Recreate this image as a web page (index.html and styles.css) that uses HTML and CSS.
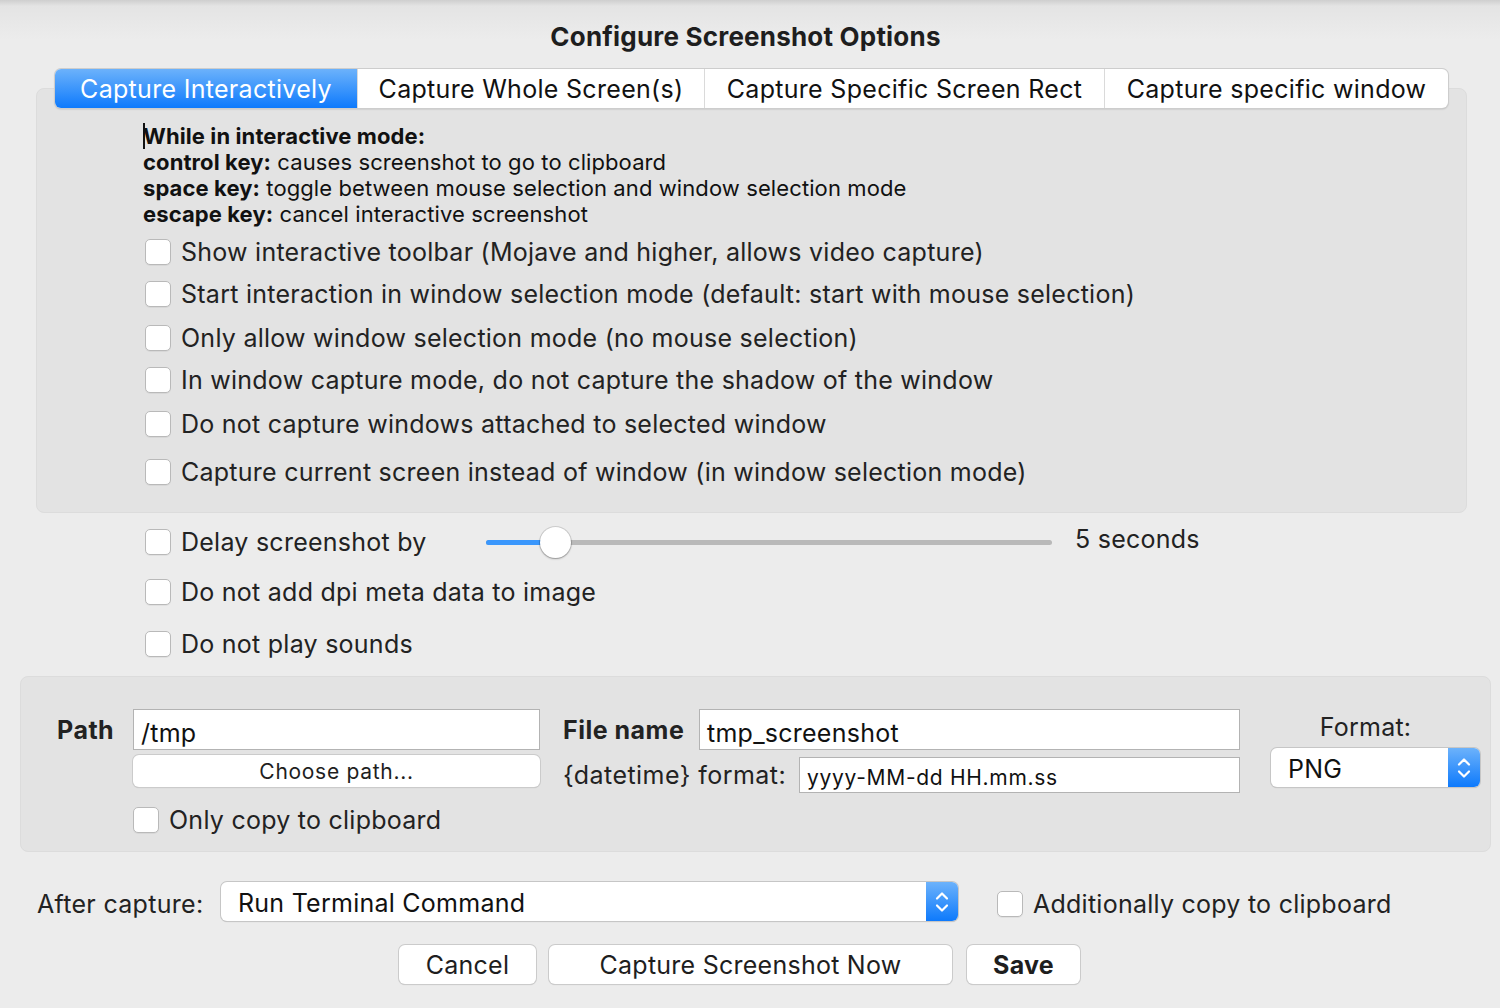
FILE: index.html
```html
<!DOCTYPE html>
<html>
<head>
<meta charset="utf-8">
<link rel="stylesheet" href="styles.css">
</head>
<body>
<div class="window">
  <h1 class="title">Configure Screenshot Options</h1>
  <div class="tabs">
    <div class="tab tab-active t1">Capture Interactively</div>
    <div class="tab t2">Capture Whole Screen(s)</div>
    <div class="tab t3">Capture Specific Screen Rect</div>
    <div class="tab t4">Capture specific window</div>
  </div>
  <div class="panel panel-top">
    <div class="info">
      <div><span class="caret"></span><b>While in interactive mode:</b></div>
      <div><b>control key:</b> causes screenshot to go to clipboard</div>
      <div><b>space key:</b> toggle between mouse selection and window selection mode</div>
      <div><b>escape key:</b> cancel interactive screenshot</div>
    </div>
    <div class="checks">
      <div class="check r1"><span class="box"></span><span>Show interactive toolbar (Mojave and higher, allows video capture)</span></div>
      <div class="check r2"><span class="box"></span><span>Start interaction in window selection mode (default: start with mouse selection)</span></div>
      <div class="check r3"><span class="box"></span><span>Only allow window selection mode (no mouse selection)</span></div>
      <div class="check r4"><span class="box"></span><span>In window capture mode, do not capture the shadow of the window</span></div>
      <div class="check r5"><span class="box"></span><span>Do not capture windows attached to selected window</span></div>
      <div class="check r6"><span class="box"></span><span>Capture current screen instead of window (in window selection mode)</span></div>
    </div>
  </div>
  <div class="general">
    <div class="check delay-row">
      <span class="box"></span><span class="delay-label">Delay screenshot by</span>
      <div class="slider">
        <div class="track"><div class="fill"></div></div>
        <div class="thumb"></div>
      </div>
      <span class="secs">5 seconds</span>
    </div>
    <div class="check g2"><span class="box"></span><span>Do not add dpi meta data to image</span></div>
    <div class="check g3"><span class="box"></span><span>Do not play sounds</span></div>
  </div>
  <div class="panel panel-file">
    <div class="grp-path">
      <div class="row">
        <span class="lbl-bold path-lbl">Path</span>
        <div class="field path-field">/tmp</div>
      </div>
      <div class="btn choose">Choose path...</div>
      <div class="check only-copy"><span class="box"></span><span>Only copy to clipboard</span></div>
    </div>
    <div class="grp-file">
      <div class="row">
        <span class="lbl-bold file-lbl">File name</span>
        <div class="field file-field">tmp_screenshot</div>
      </div>
      <div class="row row-dt">
        <span class="dt-lbl">{datetime} format:</span>
        <div class="field dt-field">yyyy-MM-dd HH.mm.ss</div>
      </div>
    </div>
    <div class="grp-format">
      <div class="fmt-lbl">Format:</div>
      <div class="select fmt-select">
        <span class="sel-text">PNG</span>
        <span class="stepper"><svg width="16" height="26" viewBox="0 0 16 26"><path d="M3 9.5 L8 4.5 L13 9.5" fill="none" stroke="#fff" stroke-width="2.2" stroke-linecap="round" stroke-linejoin="round"/><path d="M3 16.5 L8 21.5 L13 16.5" fill="none" stroke="#fff" stroke-width="2.2" stroke-linecap="round" stroke-linejoin="round"/></svg></span>
      </div>
    </div>
  </div>
  <div class="after-row">
    <span class="after-lbl">After capture:</span>
    <div class="select after-select">
      <span class="sel-text">Run Terminal Command</span>
      <span class="stepper"><svg width="16" height="26" viewBox="0 0 16 26"><path d="M3 9.5 L8 4.5 L13 9.5" fill="none" stroke="#fff" stroke-width="2.2" stroke-linecap="round" stroke-linejoin="round"/><path d="M3 16.5 L8 21.5 L13 16.5" fill="none" stroke="#fff" stroke-width="2.2" stroke-linecap="round" stroke-linejoin="round"/></svg></span>
    </div>
    <div class="check add-copy"><span class="box"></span><span>Additionally copy to clipboard</span></div>
  </div>
  <div class="buttons">
    <div class="btn b-cancel">Cancel</div>
    <div class="btn b-capture">Capture Screenshot Now</div>
    <div class="btn b-save">Save</div>
  </div>
</div>
</body>
</html>
```
FILE: styles.css
```css
* { box-sizing: border-box; }
html, body { margin: 0; padding: 0; }
body {
  width: 1500px;
  height: 1008px;
  overflow: hidden;
  background: linear-gradient(#cfcfcf 0px, #e4e4e4 6px, #ececec 40px, #ececec 100%);
  font-family: Inter, "Liberation Sans", Arial, sans-serif;
  color: #222;
  letter-spacing: 0.25px;
}
.window { display: flex; flex-direction: column; }
.title {
  margin: 22px 0 0 0;
  height: 30px;
  line-height: 30px;
  font-size: 26px;
  font-weight: 700;
  text-align: center;
  color: #1e1e1e;
  letter-spacing: 0.2px;
  padding-right: 9px;
}
.tabs {
  display: flex;
  margin: 17px 0 0 55px;
  width: 1393px;
  height: 39px;
  background: #fff;
  border-radius: 6px;
  box-shadow: 0 0 0 1px #cdcdcd, 0 1px 2px rgba(0,0,0,0.25);
  position: relative;
  z-index: 2;
  overflow: hidden;
}
.tab {
  height: 39px;
  line-height: 40px;
  font-size: 25px;
  text-align: center;
  color: #111;
  border-left: 1px solid #dadada;
  letter-spacing: 0.3px;
}
.tab-active {
  background: linear-gradient(#6cb2fb, #0e7afc);
  color: #fff;
  border-left: none;
}
.t1 { width: 302px; }
.t2 { width: 347px; }
.t3 { width: 400px; }
.t4 { width: 344px; }
.panel {
  background: #e3e3e3;
  border: 1px solid #dcdcdc;
  border-radius: 8px;
}
.panel-top {
  margin: -20px 0 0 36px;
  width: 1431px;
  height: 425px;
  padding: 34px 0 0 106px;
}
.info { font-size: 22px; line-height: 26px; color: #111; letter-spacing: 0.1px; }
.info b { color: #111; font-weight: 700; }
.caret {
  display: inline-block;
  width: 2px;
  height: 26px;
  background: #111;
  vertical-align: top;
  margin-right: -2px;
}
.checks { display: flex; flex-direction: column; margin-top: 4px; }
.check {
  display: flex;
  align-items: center;
  height: 42px;
  font-size: 25px;
  color: #222;
}
.checks .check { padding-left: 2px; }
.r3, .r5 { margin-top: 2px; }
.r6 { margin-top: 6px; }
.box {
  flex: none;
  width: 26px;
  height: 26px;
  background: #fff;
  border: 1px solid #b9b9b9;
  border-radius: 5px;
  box-shadow: 0 1px 0 rgba(0,0,0,0.05);
  margin-right: 10px;
}
.general { display: flex; flex-direction: column; margin: 8px 0 0 145px; }
.general .check { margin-bottom: 8px; }
.g3 { margin-top: 2px; }
.delay-label { width: 305px; }
.slider { position: relative; width: 566px; height: 42px; }
.track {
  position: absolute;
  left: 0; right: 0; top: 19px;
  height: 5px;
  border-radius: 3px;
  background: #b9b9b9;
  overflow: hidden;
}
.fill { width: 70px; height: 5px; background: #3a97fc; }
.thumb {
  position: absolute;
  left: 54px; top: 6px;
  width: 31px; height: 31px;
  border-radius: 50%;
  background: #fff;
  box-shadow: 0 0 0 1px rgba(0,0,0,0.12), 0 1px 2px rgba(0,0,0,0.3);
}
.secs { margin-left: 23px; margin-top: -6px; }
.panel-file {
  margin: 3px 0 0 20px;
  width: 1471px;
  height: 176px;
  display: flex;
  padding: 32px 0 0 36px;
  font-size: 25px;
}
.row { display: flex; align-items: center; }
.lbl-bold { font-weight: 700; color: #222; letter-spacing: 0.5px; }
.path-lbl { width: 76px; }
.field {
  background: #fff;
  border: 1px solid #b3b3b3;
  height: 41px;
  line-height: 41px;
  padding: 3px 0 0 7px;
  color: #111;
}
.path-field { width: 407px; }
.btn {
  background: #fff;
  border-radius: 6px;
  box-shadow: 0 0 0 1px #cbcbcb, 0 1px 1px rgba(0,0,0,0.18);
  text-align: center;
  color: #1e1e1e;
}
.choose {
  margin: 5px 0 0 76px;
  width: 407px;
  height: 32px;
  line-height: 33px;
  font-size: 21px;
  letter-spacing: 0.7px;
}
.only-copy { margin: 12px 0 0 76px; }
.grp-file { margin-left: 23px; width: 677px; display: flex; flex-direction: column; }
.file-lbl { width: 136px; }
.file-field { flex: 1; }
.row-dt { margin-top: 7px; }
.dt-lbl { width: 236px; letter-spacing: 0.45px; }
.dt-field { flex: 1; height: 36px; line-height: 34px; font-size: 21px; letter-spacing: 0.7px; }
.grp-format { margin-left: 31px; width: 209px; display: flex; flex-direction: column; }
.fmt-lbl { text-align: center; height: 36px; line-height: 36px; padding-right: 20px; }
.select {
  display: flex;
  background: #fff;
  border-radius: 6px;
  box-shadow: 0 0 0 1px #c6c6c6, 0 1px 1px rgba(0,0,0,0.2);
  height: 39px;
  overflow: hidden;
}
.sel-text { flex: 1; line-height: 39px; padding: 2px 0 0 17px; color: #111; }
.stepper {
  width: 32px;
  background: linear-gradient(#6cb2fb, #0e7afc);
  display: flex;
  align-items: center;
  justify-content: center;
}
.fmt-select { margin-top: 3px; }
.after-row {
  display: flex;
  align-items: center;
  margin: 30px 0 0 37px;
  height: 39px;
  font-size: 25px;
}
.after-lbl { width: 184px; padding-top: 4px; letter-spacing: 0.3px; }
.after-select { width: 737px; }
.add-copy { margin-left: 39px; padding-top: 4px; }
.buttons {
  display: flex;
  margin: 24px 0 0 399px;
  font-size: 25px;
}
.buttons .btn { height: 39px; line-height: 40px; }
.b-cancel { width: 137px; }
.b-capture { width: 403px; margin-left: 13px; }
.b-save { width: 113px; margin-left: 15px; font-weight: 700; }
```
